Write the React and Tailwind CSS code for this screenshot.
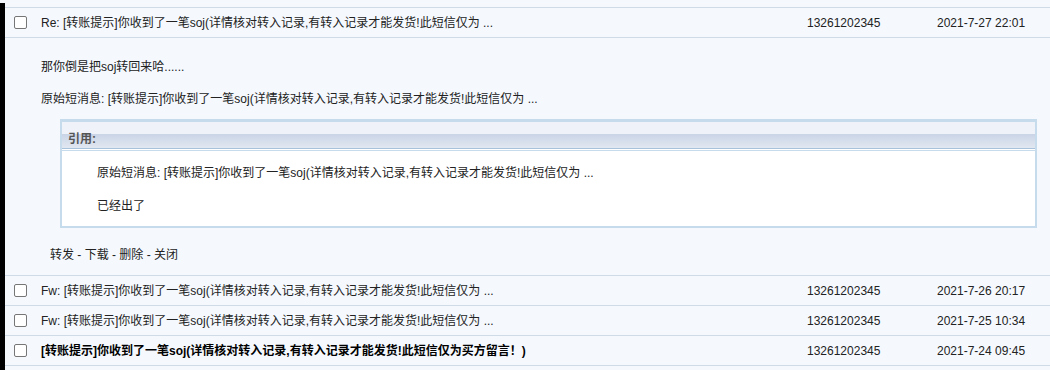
import React from 'react';

const subject = '[转账提示]你收到了一笔soj(详情核对转入记录,有转入记录才能发货!此短信仅为 ...';

const Checkbox = () => (
  <span className="inline-block w-[13px] h-[13px] rounded-[2px] border border-[#767676] bg-white" />
);

const Row = ({ title, phone, date, bold }) => (
  <div className="flex items-center h-[30px] border-b border-[#cfdbe7]">
    <div className="w-[36px] pl-[9px] flex items-center">
      <Checkbox />
    </div>
    <div className={`flex-1 ${bold ? 'font-bold text-black' : 'text-[#222]'}`}>{title}</div>
    <div className="w-[130px] text-[#222]">{phone}</div>
    <div className="w-[113px] text-[#222]">{date}</div>
  </div>
);

export default function App() {
  return (
    <div
      className="w-[1050px] h-[370px] overflow-hidden bg-[#f5f9fe] flex text-[12px] leading-[16px]"
      style={{ fontFamily: '"Liberation Sans", "Noto Sans CJK SC", Arial, sans-serif' }}
    >
      {/* window edge */}
      <div className="w-[5px] bg-black mt-[3px]" />

      <div className="flex-1 pt-[7px]">
        <div className="border-t border-[#cfdbe7]">
          <Row title={'Re: ' + subject} phone="13261202345" date="2021-7-27 22:01" />

          {/* expanded message */}
          <div className="border-b border-[#cfdbe7] pt-[21px] pb-[12px]">
            <div className="pl-[36px] text-[#222]">那你倒是把soj转回来哈......</div>
            <div className="pl-[36px] mt-[16px] text-[#222]">原始短消息: {subject}</div>

            <div className="ml-[55px] w-[977px] mt-[12px] border-t-[3px] border-l-2 border-r-2 border-b-2 border-[#c6dbec] bg-white">
              <div className="h-[12px] bg-[#eff3f9]" />
              <div className="h-[14px] bg-gradient-to-b from-[#c9d4e6] to-[#e2e8f1] flex items-center pl-[6px]">
                <span className="font-bold text-[#555] -mt-[5px]">引用:</span>
              </div>
              <div className="h-[1px] bg-[#a9c2db]" />
              <div className="h-[1px] bg-white" />
              <div className="h-[1px] bg-[#c6dbec]" />
              <div className="pl-[35px] pt-[14px] pb-[12px] text-[#222]">
                <div>原始短消息: {subject}</div>
                <div className="mt-[17px]">已经出了</div>
              </div>
            </div>

            <div className="pl-[45px] mt-[19px] text-[#222]">
              转发 - 下载 - 删除 - 关闭
            </div>
          </div>

          <Row title={'Fw: ' + subject} phone="13261202345" date="2021-7-26 20:17" />
          <Row title={'Fw: ' + subject} phone="13261202345" date="2021-7-25 10:34" />
          <Row
            bold
            title="[转账提示]你收到了一笔soj(详情核对转入记录,有转入记录才能发货!此短信仅为买方留言！)"
            phone="13261202345"
            date="2021-7-24 09:45"
          />
        </div>
      </div>
    </div>
  );
}
